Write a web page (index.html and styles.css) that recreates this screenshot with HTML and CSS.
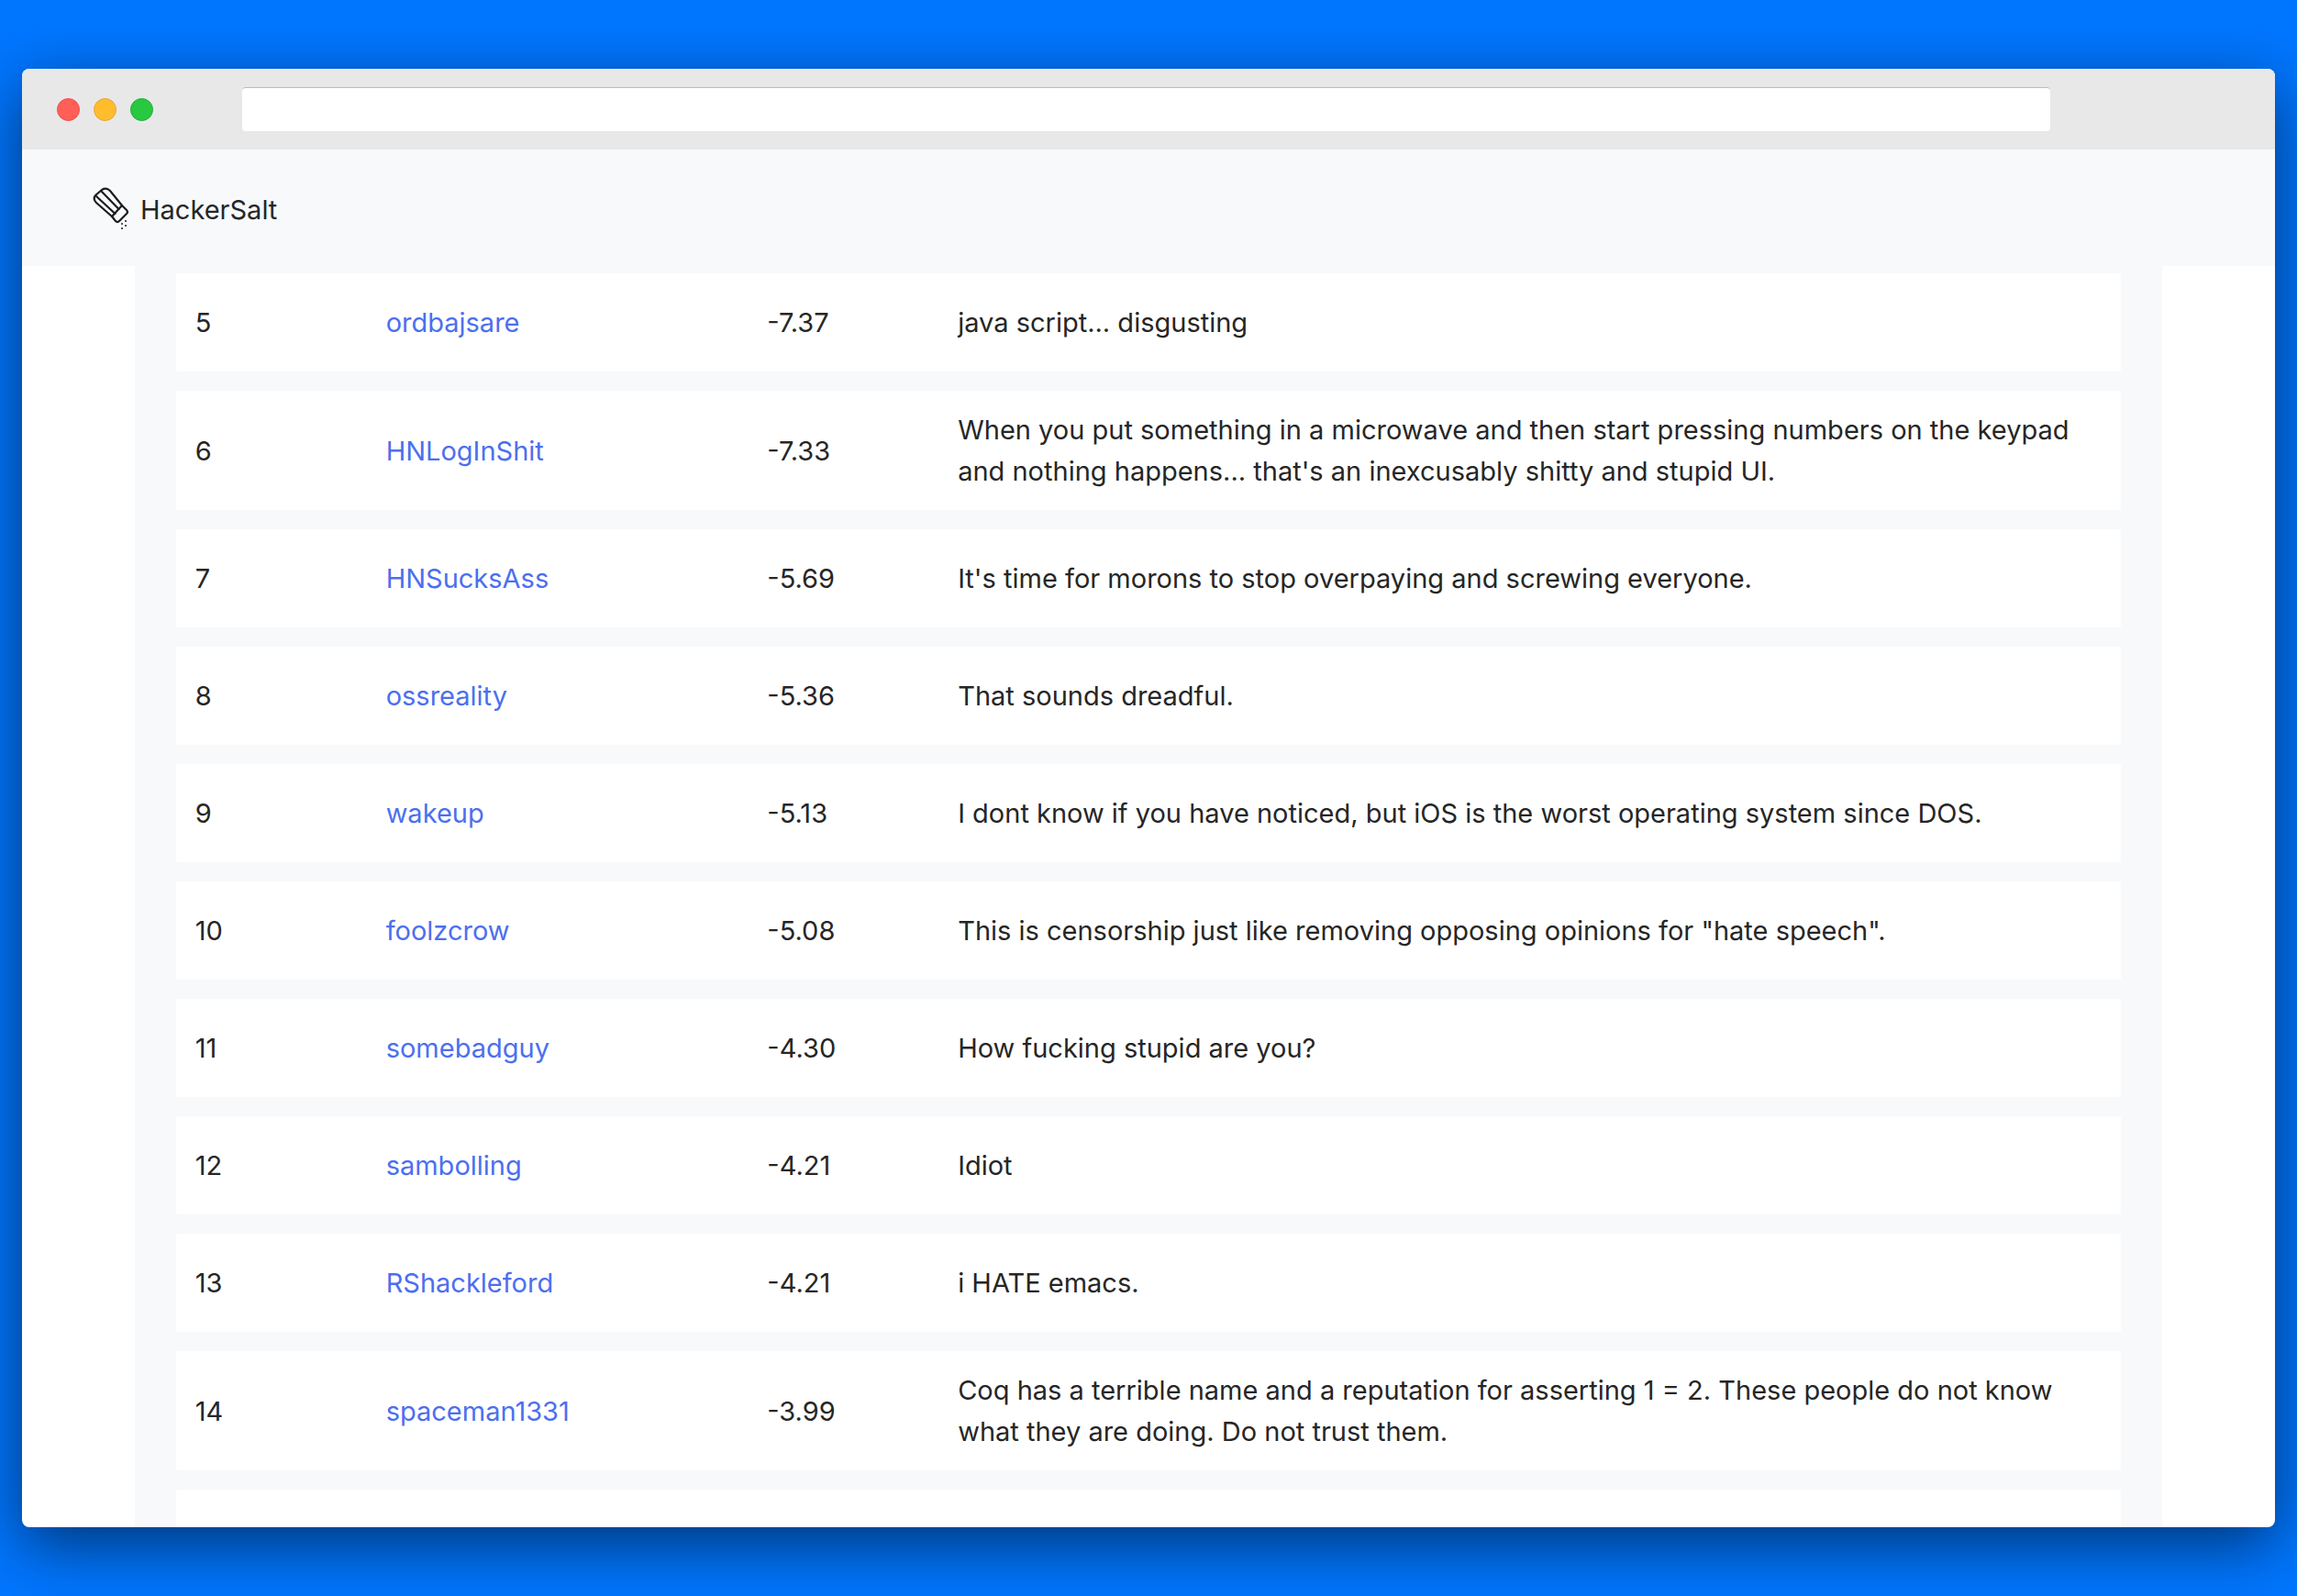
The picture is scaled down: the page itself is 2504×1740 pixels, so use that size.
FILE: index.html
```
<!DOCTYPE html>
<html lang="en">

<head>
    <meta charset="utf-8">
    <title>HackerSalt</title>
    <link rel="stylesheet" href="styles.css">
</head>

<body>
    <div class="window">
        <div class="titlebar">
            <div class="lights">
                <span class="light close"></span>
                <span class="light minimize"></span>
                <span class="light maximize"></span>
            </div>
            <input class="address" type="text" aria-label="Address">
        </div>

        <header class="header">
            <a class="brand" href="#">
                <svg class="logo" viewBox="0 0 46 52" fill="none" stroke="#1c1c1c" stroke-width="2.2" stroke-linejoin="round" stroke-linecap="round">
                    <path d="M6 11 L13 5 Q18 2 22 6 L35 22 L24 34 L7 19 Q3 15 6 11 Z" />
                    <path d="M35 22 L40 27 Q42 29 40 31 L32 39 Q30 41 28 39 L24 34" />
                    <path d="M7 12 L27.5 31 M13 7 L31.5 26" />
                    <g fill="#555" stroke="none">
                        <rect x="38" y="38" width="2" height="2" />
                        <rect x="34" y="41" width="2" height="2" />
                        <rect x="38" y="43" width="2" height="2" />
                        <rect x="34" y="46" width="2" height="2" />
                    </g>
                </svg>
                <span>HackerSalt</span>
            </a>
        </header>

        <main class="content">
            <table class="users">
                <tbody>
                    <tr>
                        <td>5</td>
                        <td><a href="#">ordbajsare</a></td>
                        <td>-7.37</td>
                        <td>java script... disgusting</td>
                    </tr>
                    <tr>
                        <td>6</td>
                        <td><a href="#">HNLogInShit</a></td>
                        <td>-7.33</td>
                        <td>When you put something in a microwave and then start pressing numbers on the keypad and nothing happens... that's an inexcusably shitty and stupid UI.</td>
                    </tr>
                    <tr>
                        <td>7</td>
                        <td><a href="#">HNSucksAss</a></td>
                        <td>-5.69</td>
                        <td>It's time for morons to stop overpaying and screwing everyone.</td>
                    </tr>
                    <tr>
                        <td>8</td>
                        <td><a href="#">ossreality</a></td>
                        <td>-5.36</td>
                        <td>That sounds dreadful.</td>
                    </tr>
                    <tr>
                        <td>9</td>
                        <td><a href="#">wakeup</a></td>
                        <td>-5.13</td>
                        <td>I dont know if you have noticed, but iOS is the worst operating system since DOS.</td>
                    </tr>
                    <tr>
                        <td>10</td>
                        <td><a href="#">foolzcrow</a></td>
                        <td>-5.08</td>
                        <td>This is censorship just like removing opposing opinions for "hate speech".</td>
                    </tr>
                    <tr>
                        <td>11</td>
                        <td><a href="#">somebadguy</a></td>
                        <td>-4.30</td>
                        <td>How fucking stupid are you?</td>
                    </tr>
                    <tr>
                        <td>12</td>
                        <td><a href="#">sambolling</a></td>
                        <td>-4.21</td>
                        <td>Idiot</td>
                    </tr>
                    <tr>
                        <td>13</td>
                        <td><a href="#">RShackleford</a></td>
                        <td>-4.21</td>
                        <td>i HATE emacs.</td>
                    </tr>
                    <tr>
                        <td>14</td>
                        <td><a href="#">spaceman1331</a></td>
                        <td>-3.99</td>
                        <td>Coq has a terrible name and a reputation for asserting 1 = 2. These people do not know what they are doing. Do not trust them.</td>
                    </tr>
                    <tr></tr>
                </tbody>
            </table>
        </main>
    </div>
</body>

</html>
```

FILE: styles.css
```
:root {
    --bg: #0076ff;
    --bar: #e8e8e8;
    --panel: #f7f9fb;
    --text: #262626;
    --link: #4c6fef;
}

* {
    box-sizing: border-box;
}

body {
    margin: 0;
    height: 100vh;
    padding: 75px 24px;
    overflow: hidden;
    background-color: var(--bg);
    color: var(--text);
    font-family: Inter, "Liberation Sans", sans-serif;
    font-size: 29px;
    line-height: 45px;
}

a {
    color: var(--link);
    text-decoration: none;
}

.window {
    display: flex;
    flex-direction: column;
    height: 100%;
    overflow: hidden;
    background-color: white;
    border-radius: 8px;
    box-shadow: 0 20px 68px rgba(0, 0, 0, 0.55);
}

.titlebar {
    display: flex;
    flex-shrink: 0;
    align-items: center;
    height: 88px;
    padding: 0 245px 0 38px;
    background-color: var(--bar);
}

.lights {
    display: flex;
    gap: 15px;
    margin-right: 97px;
}

.light {
    width: 25px;
    height: 25px;
    border: 1px solid;
    border-radius: 50%;
}

.close {
    background-color: #ff5f57;
    border-color: #e9504a;
}

.minimize {
    background-color: #ffbd2e;
    border-color: #e5a53a;
}

.maximize {
    background-color: #28c940;
    border-color: #1fae36;
}

.address {
    flex: 1;
    height: 48px;
    padding: 0 16px;
    background-color: white;
    border: 0;
    border-top: 1px solid #bbb;
    border-radius: 4px;
    font: inherit;
    outline: none;
}

.header {
    flex-shrink: 0;
    padding: 39px 74px 36px;
    background-color: var(--panel);
}

.brand {
    display: flex;
    align-items: center;
    gap: 9px;
    color: var(--text);
}

.logo {
    width: 46px;
    height: 52px;
}

.content {
    flex: 1;
    min-height: 0;
    margin: 0 5%;
    padding: 8px 45px 0;
    overflow: hidden;
    background-color: var(--panel);
}

.users {
    display: block;
}

.users tbody {
    display: flex;
    flex-direction: column;
    gap: 21px;
}

.users tr {
    display: grid;
    grid-template-columns: 1fr 2fr 1fr 6fr;
    align-items: center;
    min-height: 107px;
    padding: 20px 21px;
    background-color: white;
}

.users td {
    padding: 0;
}
```
